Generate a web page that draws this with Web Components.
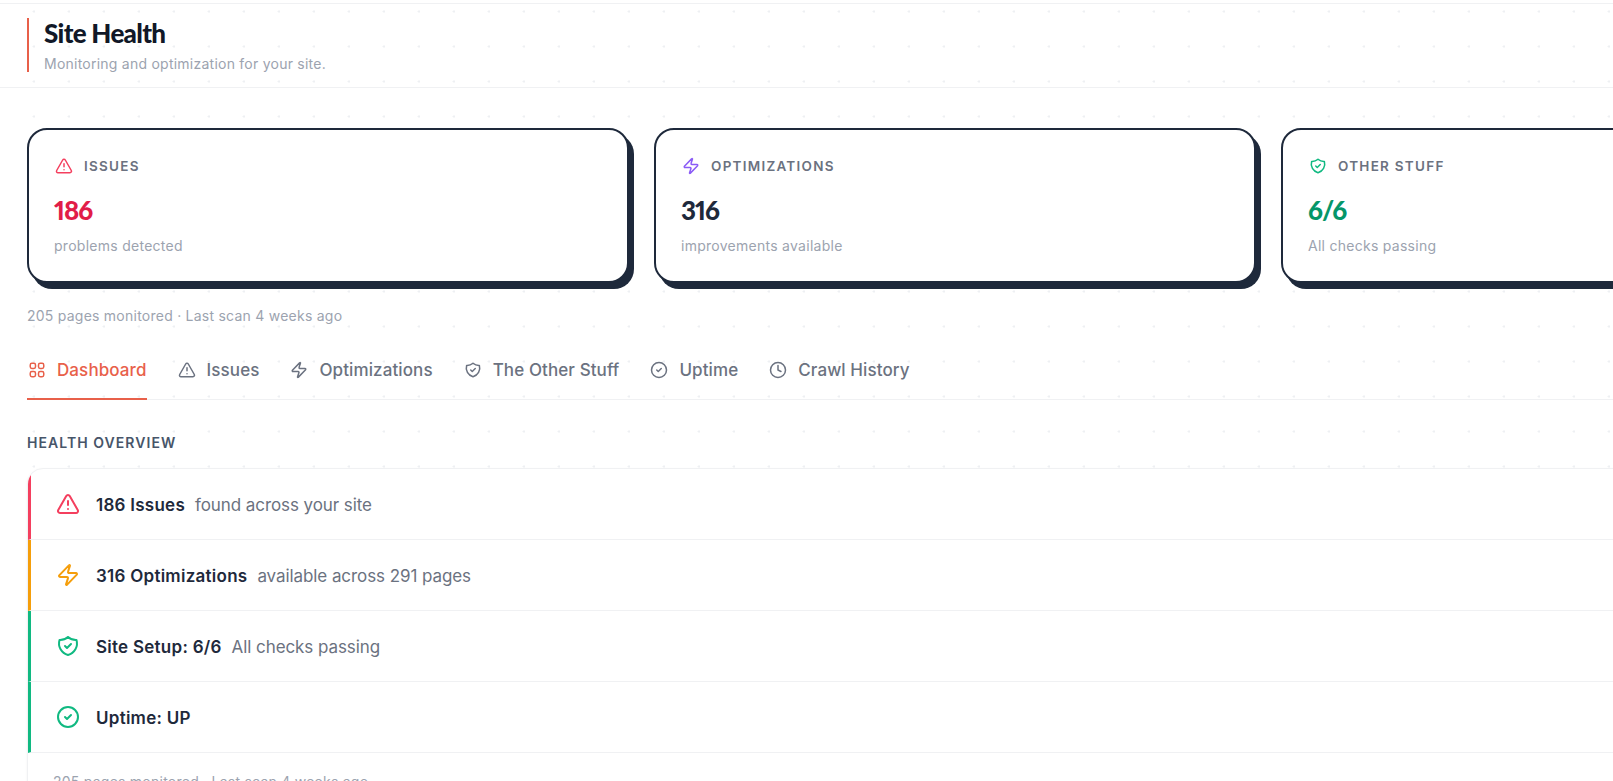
<!DOCTYPE html>
<html lang="en"><head><meta charset="utf-8"><title>Site Health</title>
<style>
html,body{margin:0;padding:0;height:781px;overflow:hidden;background:#fff}
body{font-family:Inter,"Liberation Sans",sans-serif;color:#111827;
background-image:url("data:image/svg+xml,%3Csvg xmlns='http://www.w3.org/2000/svg' width='35' height='35'%3E%3Cpath d='M34 10v3M32.5 11.5h3' stroke='%23eef0f3' stroke-width='1'/%3E%3C/svg%3E");background-size:35px 35px}
</style></head><body>
<site-health></site-health>
<script>
const P={
alert:'<path d="m21.73 18-8-14a2 2 0 0 0-3.48 0l-8 14A2 2 0 0 0 4 21h16a2 2 0 0 0 1.73-3"/><path d="M12 9v4"/><path d="M12 17h.01"/>',
bolt:'<path d="M4 14a1 1 0 0 1-.78-1.63l9.9-10.2a.5.5 0 0 1 .86.46l-1.92 6.02A1 1 0 0 0 13 10h7a1 1 0 0 1 .78 1.63l-9.9 10.2a.5.5 0 0 1-.86-.46l1.92-6.02A1 1 0 0 0 11 14z"/>',
shield:'<path d="M12 3a12 12 0 0 0 8.5 3a12 12 0 0 1-8.5 15a12 12 0 0 1-8.5-15a12 12 0 0 0 8.5-3"/><path d="m9 12 2 2 4-4"/>',
check:'<circle cx="12" cy="12" r="10"/><path d="m9 12 2 2 4-4"/>',
clock:'<circle cx="12" cy="12" r="10"/><path d="M12 6v6l4 2"/>',
grid:'<rect x="3" y="3" width="7" height="7" rx="2.2"/><rect x="14" y="3" width="7" height="7" rx="2.2"/><rect x="3" y="14" width="7" height="7" rx="2.2"/><rect x="14" y="14" width="7" height="7" rx="2.2"/>'
};
class Base extends HTMLElement{
  constructor(){super();this.attachShadow({mode:'open'})}
  connectedCallback(){this.shadowRoot.innerHTML=this.view()}
  a(n){return this.getAttribute(n)||''}
}
class SvgIcon extends Base{
  view(){const s=this.a('size')||18;return `<style>:host{display:inline-flex;flex:none;width:${s}px;height:${s}px;color:${this.a('color')||'currentColor'}}svg{display:block}</style>
  <svg width="${s}" height="${s}" viewBox="0 0 24 24" fill="none" stroke="currentColor" stroke-width="2" stroke-linecap="round" stroke-linejoin="round">${P[this.a('name')]}</svg>`}
}
class PageHeader extends Base{
  view(){return `<style>
  :host{display:block;margin-top:3px;border-top:1px solid #f0f1f3;border-bottom:1px solid #f0f1f3;padding:14px 27px 15px}
  .b{border-left:2px solid #e8604a;padding-left:15px;height:54px;box-sizing:border-box}
  h1{margin:0;font:900 26px/30px Lato,sans-serif;color:#111827;letter-spacing:-.7px}
  p{margin:6px 0 0;font:400 14px/20px Inter,sans-serif;color:#9ca3af;letter-spacing:.24px}
  </style><div class="b"><h1><slot name="t"></slot></h1><p><slot name="s"></slot></p></div>`}
}
class StatCard extends Base{
  view(){return `<style>
  :host{display:block;box-sizing:border-box;height:155px;background:#fff;border:2px solid #1e293b;border-radius:20px;box-shadow:5px 6px 0 #1e293b;padding:26px 25px 25px}
  .l{display:flex;align-items:center;gap:11px;height:20px;padding-left:1px;font:600 13.5px/20px Inter,sans-serif;letter-spacing:1.25px;color:#6b7280}
  .n{margin-top:18px;font:900 26px/32px Lato,sans-serif;font-variant-numeric:proportional-nums;letter-spacing:-1px;color:${this.a('color')||'#1e293b'}}
  .s{margin-top:10px;font:400 14px/20px Inter,sans-serif;letter-spacing:.27px;color:#9ca3af}
  </style><div class="l"><svg-icon name="${this.a('icon')}" size="18" color="${this.a('ic')}"></svg-icon>${this.a('label')}</div>
  <div class="n">${this.a('value')}</div><div class="s">${this.a('sub')}</div>`}
}
class TabItem extends Base{
  view(){const on=this.hasAttribute('active');return `<style>
  :host{display:flex;align-items:center;gap:11px;box-sizing:border-box;height:59px;padding:1px 0 0 ${on?1:0}px;margin-bottom:-1px;font:500 17px/20px Inter,sans-serif;letter-spacing:.1px;color:${on?'#e8604a':'#6b7280'};border-bottom:2px solid ${on?'#e8604a':'transparent'}}
  </style><svg-icon name="${this.a('icon')}" size="18"></svg-icon><slot></slot>`}
}
class TabNav extends Base{
  view(){return `<style>:host{display:flex;gap:31px;margin-top:15px;border-bottom:1px solid #f0f1f3;height:58px}</style><slot></slot>`}
}
class HealthRow extends Base{
  view(){return `<style>
  :host{display:flex;align-items:center;box-sizing:border-box;height:71px;border-bottom:1px solid #f0f1f3;border-left:3px solid ${this.a('color')};padding-left:25px;font:400 17px/24px Inter,sans-serif;color:#6b7280}
  b{font-weight:600;letter-spacing:.26px;color:#1e293b;margin:0 10px 0 16px;padding-top:1px}
  span{letter-spacing:-.08px;padding-top:1px}
  </style><svg-icon name="${this.a('icon')}" size="24" color="${this.a('color')}"></svg-icon><b>${this.a('title')}</b><span>${this.a('sub')}</span>`}
}
class HealthList extends Base{
  view(){return `<style>
  :host{display:block;background:#fff;border:1px solid #f0f1f3;border-radius:16px;overflow:hidden;box-shadow:0 1px 3px rgba(0,0,0,.05)}
  .f{padding:19px 25px;font:400 14px/20px Inter,sans-serif;letter-spacing:.24px;color:#9ca3af}
  </style><slot></slot><div class="f">205 pages monitored · Last scan 4 weeks ago</div>`}
}
class SiteHealth extends Base{
  view(){return `<style>
  :host{display:block}
  main{padding:40px 0 0 27px;width:1856px}
  .g{display:grid;grid-template-columns:repeat(3,1fr);gap:25px}
  .m{margin-top:23px;font:400 14px/20px Inter,sans-serif;letter-spacing:.24px;color:#9ca3af}
  h2{margin:35px 0 17px;font:600 14px/16px Inter,sans-serif;letter-spacing:1.05px;color:#475569}
  </style>
  <page-header><span slot="t">Site Health</span><span slot="s">Monitoring and optimization for your site.</span></page-header>
  <main>
   <div class="g">
    <stat-card icon="alert" ic="#f43f5e" label="ISSUES" value="186" color="#e11d48" sub="problems detected"></stat-card>
    <stat-card icon="bolt" ic="#8b5cf6" label="OPTIMIZATIONS" value="316" sub="improvements available"></stat-card>
    <stat-card icon="shield" ic="#10b981" label="OTHER STUFF" value="6/6" color="#059669" sub="All checks passing"></stat-card>
   </div>
   <div class="m">205 pages monitored · Last scan 4 weeks ago</div>
   <tab-nav>
    <tab-item icon="grid" active>Dashboard</tab-item>
    <tab-item icon="alert">Issues</tab-item>
    <tab-item icon="bolt">Optimizations</tab-item>
    <tab-item icon="shield">The Other Stuff</tab-item>
    <tab-item icon="check">Uptime</tab-item>
    <tab-item icon="clock">Crawl History</tab-item>
   </tab-nav>
   <h2>HEALTH OVERVIEW</h2>
   <health-list>
    <health-row icon="alert" color="#f43f5e" title="186 Issues" sub="found across your site"></health-row>
    <health-row icon="bolt" color="#f59e0b" title="316 Optimizations" sub="available across 291 pages"></health-row>
    <health-row icon="shield" color="#10b981" title="Site Setup: 6/6" sub="All checks passing"></health-row>
    <health-row icon="check" color="#10b981" title="Uptime: UP"></health-row>
   </health-list>
  </main>`}
}
customElements.define('svg-icon',SvgIcon);
customElements.define('page-header',PageHeader);
customElements.define('stat-card',StatCard);
customElements.define('tab-item',TabItem);
customElements.define('tab-nav',TabNav);
customElements.define('health-row',HealthRow);
customElements.define('health-list',HealthList);
customElements.define('site-health',SiteHealth);
</script>
</body></html>
